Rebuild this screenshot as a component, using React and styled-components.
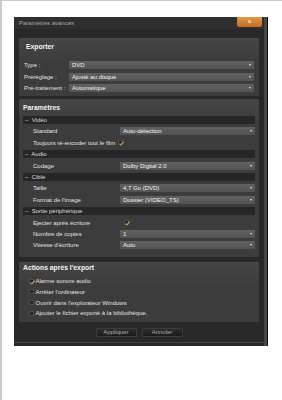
import React from 'react';
import styled, { createGlobalStyle } from 'styled-components';

const Global = createGlobalStyle`
  body {
    margin: 0;
    background: #fff;
    font-family: "Liberation Sans", Arial, sans-serif;
  }
`;

const Frame = styled.div`
  width: 282px;
  height: 400px;
  box-sizing: border-box;
  border-top: 1px solid #cbcbcb;
  border-left: 2px solid #cbcbcb;
  padding: 16px 0 0 12px;
`;

const Dialog = styled.div`
  width: 253px;
  box-sizing: border-box;
  background: #282828;
  border-right: 3px solid #474747;
  box-shadow: 1px 0 0 #0e0e0e;
  padding-bottom: 3px;
`;

const TitleBar = styled.div`
  height: 12px;
  display: flex;
  justify-content: space-between;
  align-items: flex-start;
  background: #2f2f2f;
  padding-left: 5px;
`;

const Title = styled.span`
  font-size: 6px;
  line-height: 13px;
  color: #a9a9a9;
`;

const CloseBtn = styled.div`
  width: 25px;
  height: 10px;
  margin-right: 2px;
  background: linear-gradient(#e59a46, #c26b1e);
  border-radius: 0 0 2px 2px;
  color: #fff;
  font-size: 7px;
  line-height: 10px;
  text-align: center;
`;

const Body = styled.div`
  padding: 9px 5px 0 5px;
  display: flex;
  flex-direction: column;
`;

const Panel = styled.div`
  background: linear-gradient(#464646, #3c3c3c 24px);
  border-radius: 1px;
  padding: ${p => p.$pad};
  margin-top: ${p => p.$mt || 0}px;
  display: flex;
  flex-direction: column;
`;

const PanelTitle = styled.div`
  font-size: 6.8px;
  font-weight: bold;
  line-height: 8px;
  color: #f4f4f4;
  padding-left: ${p => p.$indent || 0}px;
  margin-bottom: ${p => p.$mb}px;
`;

const List = styled.div`
  display: flex;
  flex-direction: column;
  gap: ${p => p.$gap}px;
`;

const Row = styled.div`
  height: 8px;
  display: grid;
  grid-template-columns: ${p => p.$label}px 1fr;
  align-items: center;
`;

const Label = styled.span`
  font-size: 6px;
  color: #e2e2e2;
  white-space: nowrap;
  padding-left: ${p => p.$indent || 0}px;
  display: flex;
  align-items: center;
  gap: 3px;
`;

const Select = styled.div`
  height: 8px;
  display: flex;
  justify-content: space-between;
  align-items: center;
  padding: 0 3px 0 3px;
  background: linear-gradient(#616161, #535353);
  font-size: 6px;
  color: #f3f3f3;
`;

const Arrow = styled.span`
  width: 0;
  height: 0;
  border-left: 1.5px solid transparent;
  border-right: 1.5px solid transparent;
  border-top: 2px solid #eaeaea;
`;

const Section = styled.div`
  height: 8px;
  background: #262626;
  font-size: 6px;
  line-height: 8px;
  color: #dedede;
  padding-left: 2px;
`;

const Box = styled.span`
  width: 5px;
  height: 5px;
  box-sizing: border-box;
  background: #252525;
  border: 1px solid #4c4c4c;
  display: inline-flex;
  flex-shrink: 0;
  margin-left: ${p => p.$ml || 0}px;
`;

const CheckRow = styled.div`
  height: 7px;
  display: flex;
  align-items: center;
  gap: 1.5px;
  padding-left: 6px;
  font-size: 6px;
  color: #e2e2e2;
  white-space: nowrap;
`;

const Footer = styled.div`
  height: 21px;
  border-bottom: 1px solid #434343;
  display: flex;
  justify-content: center;
  align-items: flex-start;
  gap: 5px;
  padding-top: 6px;
  box-sizing: border-box;
`;

const Button = styled.div`
  width: 41px;
  height: 9px;
  box-sizing: border-box;
  background: linear-gradient(#2c2c2c, #1b1b1b);
  border: 1px solid #3c3c3c;
  border-radius: 1px;
  font-size: 6px;
  line-height: 7px;
  text-align: center;
  color: #ababab;
`;

const Check = ({ on, ml }) => (
  <Box $ml={ml}>
    {on && (
      <svg width="5" height="5" viewBox="0 0 5 5" style={{ overflow: 'visible' }}>
        <path d="M0.6 2.6 L1.9 3.9 L4.6 0.6" fill="none" stroke="#e8963a" strokeWidth="1.2" />
      </svg>
    )}
  </Box>
);

const Drop = ({ value }) => (
  <Select>
    <span>{value}</span>
    <Arrow />
  </Select>
);

const exporter = [
  ['Type :', 'DVD'],
  ['Préréglage :', 'Ajusté au disque'],
  ['Pré-traitement :', 'Automatique'],
];

const params = [
  { section: 'Vidéo' },
  { label: 'Standard', value: 'Auto-détection' },
  { label: 'Toujours ré-encoder tout le film', inline: true },
  { section: 'Audio' },
  { label: 'Codage', value: 'Dolby Digital 2.0' },
  { section: 'Cible' },
  { label: 'Taille', value: '4,7 Go (DVD)' },
  { label: "Format de l'image", value: 'Dossier (VIDEO_TS)' },
  { section: 'Sortie périphérique' },
  { label: 'Ejecter après écriture', check: true },
  { label: 'Nombre de copies', value: '1' },
  { label: "Vitesse d'écriture", value: 'Auto' },
];

const actions = [
  ['Alarme sonore audio', true],
  ["Arrêter l'ordinateur", false],
  ["Ouvrir dans l'explorateur Windows", false],
  ['Ajouter le fichier exporté à la bibliothèque.', false],
];

export default function App() {
  return (
    <Frame>
      <Global />
      <Dialog>
        <TitleBar>
          <Title>Paramètres avancés</Title>
          <CloseBtn>×</CloseBtn>
        </TitleBar>
        <Body>
          <Panel $pad="5px 5px 4px 5px">
            <PanelTitle $indent={2} $mb={10}>Exporter</PanelTitle>
            <List $gap={3.5}>
              {exporter.map(([l, v]) => (
                <Row key={l} $label={45}>
                  <Label>{l}</Label>
                  <Drop value={v} />
                </Row>
              ))}
            </List>
          </Panel>

          <Panel $pad="5px 4px 8px 4px" $mt={3}>
            <PanelTitle $mb={4}>Paramètres</PanelTitle>
            <List $gap={3.4}>
              {params.map((p, i) => {
                if (p.section) return <Section key={i}>–&nbsp; {p.section}</Section>;
                if (p.inline)
                  return (
                    <Row key={i} $label={200}>
                      <Label $indent={10}>
                        {p.label}
                        <Check on />
                      </Label>
                    </Row>
                  );
                return (
                  <Row key={i} $label={97}>
                    <Label $indent={10}>{p.label}</Label>
                    {p.check ? (
                      <Label>
                        <Check on ml={4} />
                      </Label>
                    ) : (
                      <Drop value={p.value} />
                    )}
                  </Row>
                );
              })}
            </List>
          </Panel>

          <Panel $pad="2px 4px 5.5px 4px" $mt={5}>
            <PanelTitle $mb={5.5}>Actions après l'export</PanelTitle>
            <List $gap={3.7}>
              {actions.map(([t, on]) => (
                <CheckRow key={t}>
                  <Check on={on} />
                  <span>{t}</span>
                </CheckRow>
              ))}
            </List>
          </Panel>
        </Body>
        <Footer>
          <Button>Appliquer</Button>
          <Button>Annuler</Button>
        </Footer>
      </Dialog>
    </Frame>
  );
}
